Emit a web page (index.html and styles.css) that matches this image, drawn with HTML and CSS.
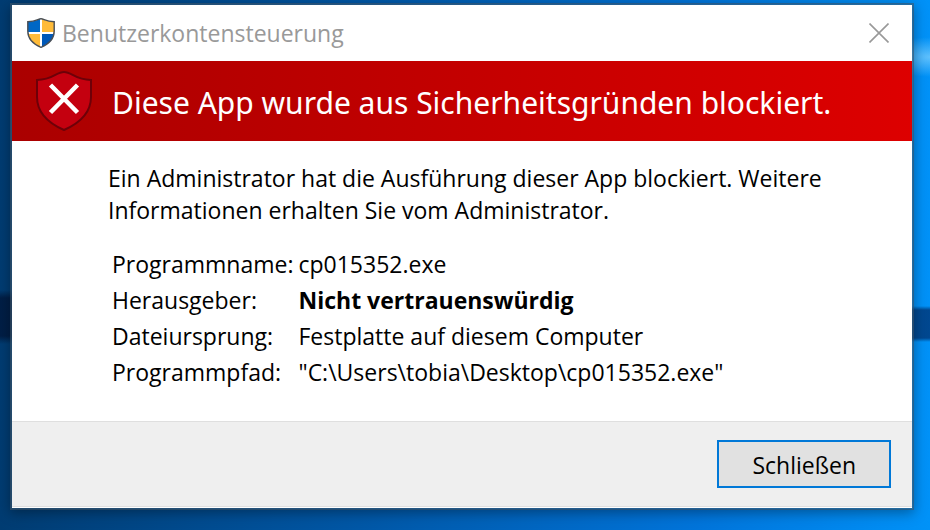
FILE: index.html
```html
<!DOCTYPE html>
<html lang="de">
<head>
    <meta charset="UTF-8">
    <title>Benutzerkontensteuerung</title>
    <link rel="stylesheet" href="styles.css">
</head>
<body>
<main class="dialog">
    <header class="titlebar">
        <svg class="uac-icon" viewBox="0 0 28 30" aria-hidden="true">
            <clipPath id="shield">
                <path d="M14 .8C11 .8 9.500 3.800 .8 3.800V13C.8 21 6 26 14 29.300C22 26 27.200 21 27.200 13V3.800C18.500 3.800 17 .8 14 .8Z"/>
            </clipPath>
            <g clip-path="url(#shield)">
                <path fill="#0067c5" d="M0 0h14v15H0z"/>
                <path fill="#ffbb38" d="M14 0h14v15H14z"/>
                <path fill="#ffbb38" d="M0 15h14v15H0z"/>
                <path fill="#0058b8" d="M14 15h14v15H14z"/>
                <path fill="#fff" d="M13 0h2v30h-2zM0 14h28v2H0z"/>
            </g>
            <path fill="none" stroke="#4a4f55" stroke-width="1.400" d="M14 .8C11 .8 9.500 3.800 .8 3.800V13C.8 21 6 26 14 29.300C22 26 27.200 21 27.200 13V3.800C18.500 3.800 17 .8 14 .8Z"/>
        </svg>
        <span class="title">Benutzerkontensteuerung</span>
        <button class="close" type="button" aria-label="Fenster schließen">
            <svg viewBox="0 0 20 20" aria-hidden="true">
                <path fill="none" stroke="#999" stroke-width="1.600" d="M.5 .5l19 19M19.500 .5l-19 19"/>
            </svg>
        </button>
    </header>

    <div class="banner">
        <svg class="blocked-icon" viewBox="0 0 56 60" aria-hidden="true">
            <path fill="#c4000f" stroke="#6e0008" stroke-width="2" d="M28 1C20 1 17 9 1 9V26C1 42 12 52 28 59C44 52 55 42 55 26V9C39 9 36 1 28 1Z"/>
            <path fill="none" stroke="#fff" stroke-width="4.500" d="M14.500 14L41.500 41.500M41.500 14L14.500 41.500"/>
        </svg>
        <h1>Diese App wurde aus Sicherheitsgründen blockiert.</h1>
    </div>

    <div class="content">
        <p>Ein Administrator hat die Ausführung dieser App blockiert. Weitere Informationen erhalten Sie vom Administrator.</p>
        <table class="details">
            <tr>
                <th scope="row">Programmname:</th>
                <td>cp015352.exe</td>
            </tr>
            <tr>
                <th scope="row">Herausgeber:</th>
                <td><strong>Nicht vertrauenswürdig</strong></td>
            </tr>
            <tr>
                <th scope="row">Dateiursprung:</th>
                <td>Festplatte auf diesem Computer</td>
            </tr>
            <tr>
                <th scope="row">Programmpfad:</th>
                <td>"C:\Users\tobia\Desktop\cp015352.exe"</td>
            </tr>
        </table>
    </div>

    <footer class="actions">
        <button class="btn" type="button">Schließen</button>
    </footer>
</main>
</body>
</html>
```
FILE: styles.css
```css
* {
    box-sizing: border-box;
}

body {
    margin: 0;
    min-height: 100vh;
    padding: 3px 16px 20px 10px;
    font-family: "Segoe UI", "Open Sans", "Noto Sans", sans-serif;
    font-size: 23px;
    color: #000;
    /* desktop wallpaper: light streak, dark bar, blue sweep */
    background:
        radial-gradient(ellipse 50px 20px at 100% 57px, rgba(120, 205, 255, 0.8), transparent) no-repeat,
        linear-gradient(rgba(0, 10, 40, 0), rgba(0, 10, 40, 0.6) 8px, rgba(0, 10, 40, 0.6) 46px, rgba(0, 10, 40, 0)) 0 290px / 50% 54px no-repeat,
        linear-gradient(rgba(0, 40, 100, 0), rgba(0, 40, 100, 0.7) 4px, rgba(0, 40, 100, 0.7) 32px, rgba(0, 40, 100, 0)) 100% 306px / 50% 36px no-repeat,
        linear-gradient(to right, #003c72, #0058a8 40%, #0074da 75%, #0092f8);
}

.dialog {
    border: 2px solid rgba(60, 85, 105, 0.6);
    background: #fff padding-box;
    box-shadow: 0 3px 12px rgba(0, 0, 0, 0.35);
    padding-bottom: 1px;
}

.titlebar {
    display: flex;
    align-items: center;
    height: 56px;
    padding: 0 23px 1px 15px;
}

.uac-icon {
    width: 28px;
    height: 30px;
    margin-right: 7px;
}

.title {
    flex: 1;
    color: #999;
}

.close {
    display: flex;
    padding: 0;
    border: none;
    background: none;
}

.close svg {
    width: 20px;
    height: 20px;
}

.banner {
    display: flex;
    align-items: center;
    gap: 20px;
    height: 80px;
    padding: 0 24px;
    background: linear-gradient(to right, #aa0000, #dd0000);
    color: #fff;
}

.blocked-icon {
    width: 56px;
    height: 60px;
}

h1 {
    margin: 0;
    padding-top: 2px;
    font-family: "Segoe UI", "Noto Sans", sans-serif;
    font-size: 30px;
    font-weight: normal;
}

.content {
    padding: 21px 80px 31px 96px;
}

.content p {
    margin: 0 0 20px;
    line-height: 32px;
}

.details {
    margin-left: 4px;
    border-collapse: collapse;
    line-height: 36px;
}

.details th {
    min-width: 186px;
    padding: 0 5px 0 0;
    font-weight: normal;
    text-align: left;
}

.details td {
    padding: 0;
}

.actions {
    display: flex;
    justify-content: flex-end;
    padding: 18px 21px;
    border-top: 1px solid #dfdfdf;
    border-bottom: 1px solid #dfdfdf;
    background: #efefef;
}

.btn {
    height: 48px;
    padding: 2px 33px 0;
    border: 2px solid #0078d7;
    background: #e1e1e1;
    color: #000;
    font: inherit;
}
```
